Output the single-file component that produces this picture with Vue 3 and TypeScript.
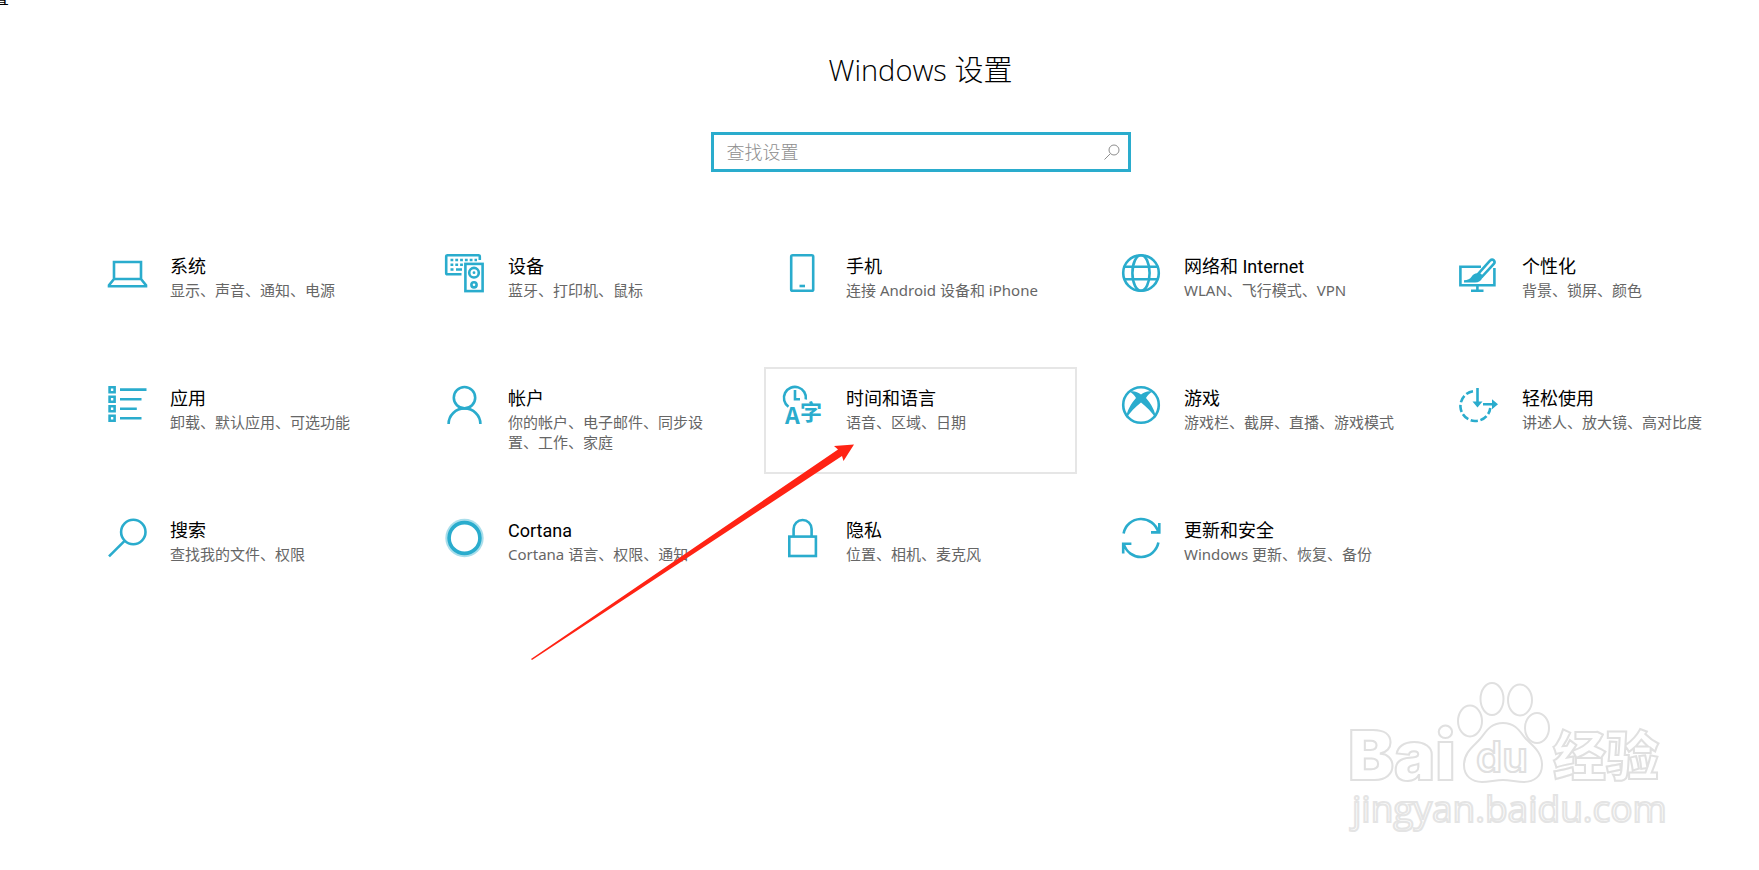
<script setup lang="ts">
import { ref } from 'vue'

interface Category {
  id: string
  title: string
  detail: string
  selected?: boolean
}

const query = ref('')

const categories: Category[] = [
  { id: 'system', title: '系统', detail: '显示、声音、通知、电源' },
  { id: 'devices', title: '设备', detail: '蓝牙、打印机、鼠标' },
  { id: 'phone', title: '手机', detail: '连接 Android 设备和 iPhone' },
  { id: 'network', title: '网络和 Internet', detail: 'WLAN、飞行模式、VPN' },
  { id: 'personal', title: '个性化', detail: '背景、锁屏、颜色' },
  { id: 'apps', title: '应用', detail: '卸载、默认应用、可选功能' },
  { id: 'accounts', title: '帐户', detail: '你的帐户、电子邮件、同步设置、工作、家庭' },
  { id: 'time', title: '时间和语言', detail: '语音、区域、日期', selected: true },
  { id: 'gaming', title: '游戏', detail: '游戏栏、截屏、直播、游戏模式' },
  { id: 'ease', title: '轻松使用', detail: '讲述人、放大镜、高对比度' },
  { id: 'search', title: '搜索', detail: '查找我的文件、权限' },
  { id: 'cortana', title: 'Cortana', detail: 'Cortana 语言、权限、通知' },
  { id: 'privacy', title: '隐私', detail: '位置、相机、麦克风' },
  { id: 'update', title: '更新和安全', detail: 'Windows 更新、恢复、备份' },
]
</script>

<template>
  <div class="page">
    <span class="corner">置</span>

    <header class="header">
      <h1 class="heading">Windows 设置</h1>
      <form class="search" role="search" @submit.prevent>
        <input v-model="query" class="search-input" type="text" placeholder="查找设置" aria-label="查找设置" />
        <button class="search-button" type="submit" aria-label="搜索">
          <svg class="search-icon" viewBox="0 0 16 16">
            <circle cx="10" cy="6" r="5" />
            <path d="M6.3 9.7 L0.5 15.5" />
          </svg>
        </button>
      </form>
    </header>

    <nav class="grid">
      <a
        v-for="item in categories"
        :key="item.id"
        class="card"
        :class="{ selected: item.selected }"
        :href="'#' + item.id"
      >
        <svg class="icon" viewBox="0 0 40 40" aria-hidden="true">
          <g v-if="item.id === 'system'">
            <path d="M7 8H34V25H7Z M7 25L2 31.2V32.3H39V31.2L34 25" />
          </g>
          <g v-else-if="item.id === 'devices'">
            <path d="M16.5 20.3H2.5Q1.2 20.3 1.2 19V2.5Q1.2 1.2 2.5 1.2H33.5Q34.8 1.2 34.8 2.5V6" />
            <path d="M5.5 6H32" stroke-dasharray="2.8 2" />
            <path d="M5.5 10.8H19" stroke-dasharray="2.8 2" />
            <path d="M5.5 15.5H8.5M11 15.5H17" />
            <rect x="20.4" y="9.9" width="17.2" height="27.2" />
            <circle cx="29" cy="18.7" r="4.8" />
            <circle class="solid" cx="29" cy="18.7" r="1.4" />
            <circle cx="29" cy="30.8" r="2.6" />
          </g>
          <g v-else-if="item.id === 'phone'">
            <rect x="8.2" y="1.2" width="22" height="35.6" rx="1.4" />
            <path d="M16.5 32H22" />
          </g>
          <g v-else-if="item.id === 'network'">
            <circle cx="20" cy="19" r="17.8" />
            <ellipse cx="20" cy="19" rx="8.6" ry="17.8" />
            <path d="M3.5 12.8H36.5M3.5 25.2H36.5" />
          </g>
          <g v-else-if="item.id === 'personal'">
            <path d="M22 12.8H1.4V31.2H35.4V14M18.4 31V36.5M12 36.8H24.5" />
            <path d="M19.4 19.6L31 6.6Q33 4.8 34.8 6.3Q36.4 8 34.8 10L23.2 22.6Z" />
            <path
              class="solid"
              d="M18.3 19.3L23.4 23.8Q21.5 28.5 16 28.5H5V26.2Q10.5 26.2 12.5 22.8Q14.5 19.3 18.3 19.3Z"
            />
          </g>
          <g v-else-if="item.id === 'apps'">
            <path d="M2.6 1.2H7.6V6.2H2.6ZM2.6 10.7H7.6V15.7H2.6ZM2.6 20.2H7.6V25.2H2.6ZM2.6 29.7H7.6V34.7H2.6Z" />
            <path d="M13 3.6H39.5M13 13.2H34.5M13 22.7H29.8M13 32.2H34.5" />
          </g>
          <g v-else-if="item.id === 'accounts'">
            <circle cx="19.5" cy="11.7" r="10.7" />
            <path d="M3.6 38A15.9 15.6 0 0 1 35.4 38" />
          </g>
          <g v-else-if="item.id === 'time'">
            <path d="M5.5 20.8A11 11 0 1 1 22.8 13.5" />
            <path d="M12 4V13.3H17" />
            <text class="glyph" x="2" y="38" font-size="23">A</text>
            <text class="glyph" x="17" y="34" font-size="22">字</text>
          </g>
          <g v-else-if="item.id === 'gaming'">
            <circle cx="20" cy="19" r="17.8" />
            <path
              class="solid"
              d="M8.5 5.6C12.5 4.2 17 6.2 20 8.4C23 6.2 27.5 4.2 31.5 5.6C29 7 26.5 9.6 25 12C30 17.5 34.5 25.5 34.8 32C31 26.5 25.5 20.5 20 16.4C14.5 20.5 9 26.5 5.2 32C5.5 25.5 10 17.5 15 12C13.5 9.6 11 7 8.5 5.6Z"
            />
          </g>
          <g v-else-if="item.id === 'ease'">
            <path d="M14 5.2A15 15 0 1 0 31.3 22" stroke-dasharray="7.3 2.6" />
            <path d="M18.5 2V17M24 18.3H33" />
            <path class="solid" d="M13.5 15.5H23.5L18.5 21.5ZM33 13.3V23.3L39 18.3Z" />
          </g>
          <g v-else-if="item.id === 'search'">
            <circle cx="26.3" cy="14" r="12.2" />
            <path d="M17.6 22.8L2 38.4" />
          </g>
          <g v-else-if="item.id === 'cortana'">
            <circle class="halo" cx="19.5" cy="20" r="19.2" />
            <circle class="ring" cx="19.5" cy="20" r="15.4" />
          </g>
          <g v-else-if="item.id === 'privacy'">
            <rect x="6.3" y="18.6" width="26.6" height="19.4" />
            <path d="M10.6 18V11A9 9 0 0 1 28.6 11V18" />
          </g>
          <g v-else>
            <path d="M2.6 15.4A17.8 17.8 0 0 1 37.2 14M38.3 5V14.4H30" />
            <path d="M37.4 24.6A17.8 17.8 0 0 1 2.8 26M2.2 35.5V25.8H10.4" />
          </g>
        </svg>
        <span class="text">
          <span class="title">{{ item.title }}</span>
          <span class="detail">{{ item.detail }}</span>
        </span>
        <svg v-if="item.selected" class="arrow" viewBox="0 0 330 220" aria-hidden="true">
          <path d="M1 216L308 6.5L304 3L324 1.5L313.500 18L312 13L2 217Z" />
        </svg>
      </a>
    </nav>

    <svg class="watermark" viewBox="0 0 350 170" aria-hidden="true">
      <text class="brand" x="18" y="110" font-size="69">Bai</text>
      <ellipse cx="140" cy="51" rx="12" ry="15.500" />
      <ellipse cx="162" cy="29" rx="11.500" ry="16" />
      <ellipse cx="190" cy="30" rx="12" ry="15.500" />
      <ellipse cx="207" cy="58" rx="12" ry="15" />
      <path
        d="M173 53C186 53 190 62 196 69C203 76 212 82 212 95C212 106 204 112 194 112C186 112 181 110 173 110C165 110 160 112 152 112C142 112 134 106 134 95C134 82 144 76 150 69C156 62 160 53 173 53Z"
      />
      <text class="brand light" x="146" y="102" font-size="42">du</text>
      <text class="brand" x="223" y="106" font-size="53">经验</text>
      <text class="site" x="22" y="152" font-size="37">jingyan.baidu.com</text>
    </svg>
  </div>
</template>

<style>
body {
  margin: 0;
  background: #fff;
}
</style>

<style scoped>
.page {
  position: relative;
  box-sizing: border-box;
  min-height: 100vh;
  padding: 48px 6px 24px 88px;
  overflow: hidden;
  background: #fff;
  color: #000;
  font-family: 'Open Sans', 'Noto Sans CJK SC', sans-serif;
}

.corner {
  position: absolute;
  left: -9px;
  top: -15px;
  font-size: 18px;
  line-height: 24px;
}

.header {
  display: flex;
  flex-direction: column;
  align-items: center;
}

.heading {
  margin: 0 0 40px;
  font-size: 29px;
  line-height: 44px;
  font-weight: 300;
}

.search {
  display: flex;
  align-items: center;
  box-sizing: border-box;
  width: 420px;
  max-width: 100%;
  height: 40px;
  border: 3px solid #2aaccd;
}

.search-input {
  flex: 1;
  min-width: 0;
  padding: 0 0 0 13px;
  border: 0;
  outline: 0;
  background: transparent;
  color: #000;
  font: inherit;
  font-size: 18px;
  line-height: 24px;
}

.search-input::placeholder {
  color: #8e8e8e;
  font-weight: 300;
  opacity: 1;
}

.search-button {
  display: flex;
  padding: 8px;
  border: 0;
  background: transparent;
}

.search-icon {
  width: 16px;
  height: 16px;
  fill: none;
  stroke: #8e8e8e;
  stroke-width: 1;
}

.grid {
  display: grid;
  grid-template-columns: repeat(5, minmax(0, 1fr));
  gap: 25px;
  margin-top: 63px;
}

.card {
  position: relative;
  display: flex;
  gap: 23px;
  box-sizing: border-box;
  min-height: 107px;
  padding: 17px 10px 17px 17px;
  border: 2px solid transparent;
  color: inherit;
  text-decoration: none;
}

.selected {
  border-color: #e6e6e6;
}

.icon {
  flex: none;
  width: 40px;
  height: 40px;
  overflow: visible;
  fill: none;
  stroke: #2aaccd;
  stroke-width: 2.6;
}

.icon .solid {
  fill: #2aaccd;
  stroke: none;
}

.icon .glyph {
  fill: #2aaccd;
  stroke: none;
  font-family: 'Noto Sans CJK SC', sans-serif;
  font-weight: 700;
}

.icon .halo {
  fill: #a9deeb;
  stroke: none;
}

.icon .ring {
  fill: #fff;
  stroke-width: 3.6;
}

.text {
  display: flex;
  flex-direction: column;
  gap: 2px;
  padding-top: 2px;
}

.title {
  font-family: Roboto, 'Noto Sans CJK SC', sans-serif;
  font-size: 18px;
  line-height: 22px;
}

.detail {
  font-family: 'Noto Sans', 'Noto Sans CJK SC', sans-serif;
  font-size: 15px;
  line-height: 20px;
  color: #666;
}

.arrow {
  position: absolute;
  z-index: 1;
  left: -236px;
  top: 74px;
  width: 330px;
  height: 220px;
  fill: #ff2314;
  pointer-events: none;
}

.watermark {
  position: absolute;
  right: 79px;
  bottom: 30px;
  width: 350px;
  height: 170px;
  fill: #fff;
  stroke: #e0e0e0;
  stroke-width: 2;
}

.brand {
  font-family: Inter, 'Noto Sans CJK SC', sans-serif;
  font-weight: 900;
}

.light {
  font-weight: 600;
}

.site {
  font-family: 'Open Sans', sans-serif;
  stroke: #e4e4e4;
}
</style>
